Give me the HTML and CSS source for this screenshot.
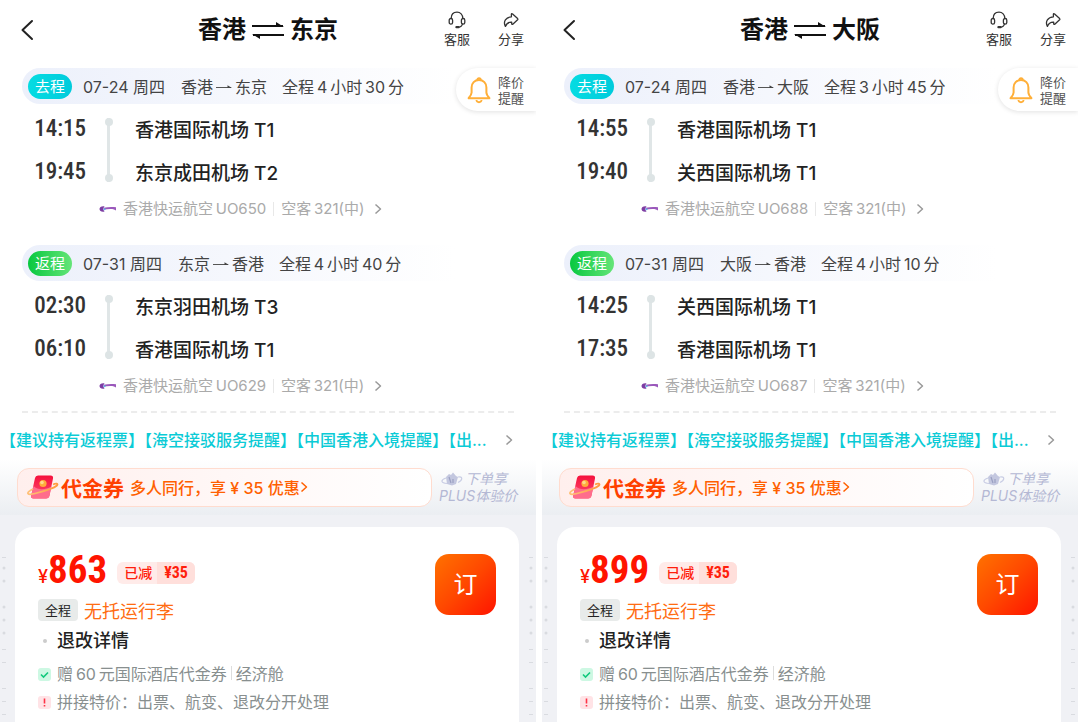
FILE: index.html
```
<!DOCTYPE html>
<html lang="zh-CN">

<head>
    <meta charset="UTF-8">
    <meta name="viewport" content="width=device-width, initial-scale=1.0">
    <title>机票对比</title>
    <link rel="stylesheet" href="styles.css">
</head>

<body>

    <!-- Shared icons -->
    <svg class="sprite" aria-hidden="true">
        <defs>
            <linearGradient id="couponFill" x1="0" y1="0" x2="0" y2="1">
                <stop offset="0" stop-color="#f5103c" />
                <stop offset="1" stop-color="#ff4f70" />
            </linearGradient>
            <linearGradient id="ringFill" x1="0" y1="0" x2="1" y2="0">
                <stop offset="0" stop-color="#ffc27a" />
                <stop offset="1" stop-color="#ff9a3d" />
            </linearGradient>
        </defs>
        <symbol id="back" viewBox="0 0 14 22">
            <path d="M12 2 L2.5 11 L12 20" fill="none" stroke="#222" stroke-width="2" stroke-linecap="round" stroke-linejoin="round" />
        </symbol>
        <symbol id="swap" viewBox="0 0 32 20">
            <path d="M0 6H31M1 15H32" fill="none" stroke="#111" stroke-width="2" />
            <path d="M32 7H24V2ZM0 14H8V19Z" fill="#111" />
        </symbol>
        <symbol id="headset" viewBox="0 0 18 18">
            <path d="M3.2 7.5C3.2 3.6 5.6 1.2 9 1.2S14.8 3.6 14.8 7.5M14.6 12.5C14.2 14.8 12.6 16.2 10 16.2" fill="none" stroke="#333" stroke-width="1.3" />
            <rect x="1.2" y="7.5" width="3.4" height="5.6" rx="1.7" fill="none" stroke="#333" stroke-width="1.3" />
            <rect x="13.4" y="7.5" width="3.4" height="5.6" rx="1.7" fill="none" stroke="#333" stroke-width="1.3" />
            <path d="M8.4 16.2H10.6" stroke="#333" stroke-width="2.2" stroke-linecap="round" />
        </symbol>
        <symbol id="share" viewBox="0 0 18 18">
            <path d="M9.4 3.2Q9.6 2.2 10.6 3L15.6 7.6Q16.2 8.2 15.6 8.8L10.8 13.2Q9.8 13.8 9.7 12.6V11.2C6.5 11 4.6 12.4 3.4 15.4C.8 10.5 4 6.2 9.4 5.8Z" fill="none" stroke="#333" stroke-width="1.3" stroke-linejoin="round" />
        </symbol>
        <symbol id="bell" viewBox="0 0 26 28">
            <path d="M13 4C8.6 4 5.6 7.2 5.6 11.4V16.5C5.6 18.6 4.4 20 2.6 22.2H23.4C21.6 20 20.4 18.6 20.4 16.5V11.4C20.4 7.2 17.4 4 13 4Z" fill="none" stroke="#ffaf38" stroke-width="2" stroke-linejoin="round" />
            <path d="M11.2 4C11.2 1.4 14.8 1.4 14.8 4M10.4 24C10.8 27 15.2 27 15.6 24" fill="none" stroke="#ffaf38" stroke-width="1.8" />
        </symbol>
        <symbol id="arrow" viewBox="0 0 16 8">
            <path d="M0 5.5H15" fill="none" stroke="#555" stroke-width="1" />
            <path d="M16 6H11.5V3.2Z" fill="#444" />
        </symbol>
        <symbol id="airline" viewBox="0 0 18 8">
            <path d="M5.5 1.3C2.5 .8 .5 2.2 .5 4S2.5 7.2 5.5 6.5L4.5 5Q3.5 4 4.5 3Z" fill="#7d3da3" />
            <path d="M4.5 2.8C9 1.8 13 1.8 17 2.2V5.4L15 4.4C12 3.9 8 4.1 4.5 4.8Z" fill="#9a58bb" />
            <circle cx="5.5" cy="4.2" r="1" fill="#58b6e8" />
        </symbol>
        <symbol id="chevron" viewBox="0 0 8 12">
            <path d="M1.5 1.5L6.5 6L1.5 10.5" fill="none" stroke="currentColor" stroke-width="1.5" stroke-linejoin="round" />
        </symbol>
        <symbol id="coupon" viewBox="0 0 32 26">
            <path d="M11 1.5H23.5Q26.5 1.5 26 4.5L22.5 21.5Q22 24.5 19 24.5H6.5Q3.5 24.5 4.2 21.5L8 4Q8.5 1.5 11 1.5Z" fill="url(#couponFill)" />
            <path d="M6.5 12C11 16.5 18 16 24.4 12.5L22.5 21.5Q22 24.5 19 24.5H6.5Q3.5 24.5 4.2 21.5Z" fill="#ff6d8c" />
            <path d="M6 15C-2 19 0 21.5 8 19.5S26 15 30 11.5C31.5 9.5 29 9 26 10.5" fill="none" stroke="url(#ringFill)" stroke-width="1.8" />
            <circle cx="16" cy="9.5" r="3.6" fill="#ffad3b" />
            <circle cx="15" cy="8.5" r="1.8" fill="#ffd98a" />
        </symbol>
        <symbol id="plus" viewBox="0 0 22 14">
            <path d="M5 5L8 2L10 3L12 .5L15 4L17 5L15 12L11 13.5L6 12Z" fill="#c3c7df" />
            <path d="M8 5L10 11M12 7V11" stroke="#9a9fc2" stroke-width="1.2" />
            <path d="M5 6C-1 8 0 11 6 11.5M17 5C22 4 22 8 17 10.5" fill="none" stroke="#c9cde4" stroke-width="1.2" />
        </symbol>
    </svg>

    <main class="compare" id="compare"></main>

    <script src="app.js"></script>
</body>

</html>
```
FILE: styles.css
```
* {
    box-sizing: border-box;
}

body {
    margin: 0;
    background-color: #fff;
    color: #222;
    font-family: Inter, "Noto Sans CJK SC", sans-serif;
}

button {
    border: none;
    padding: 0;
    background: none;
    color: inherit;
    font: inherit;
    cursor: pointer;
}

a {
    color: inherit;
    text-decoration: none;
}

svg {
    display: block;
    flex: none;
}

h1,
h2,
p,
ul {
    margin: 0;
    padding: 0;
    font-weight: 400;
    list-style: none;
}

.sprite {
    position: absolute;
    width: 0;
    height: 0;
}

.compare {
    display: grid;
    grid-template-columns: 1fr 1fr;
    gap: 6px;
    padding-right: 2px;
    min-height: 100vh;
}

.panel {
    display: flex;
    flex-direction: column;
    min-width: 0;
    position: relative;
    overflow: hidden;
}

/* Top bar */
.topbar {
    display: grid;
    grid-template-columns: 1fr auto 1fr;
    align-items: center;
    height: 60px;
    padding: 0 12px;
}

.back {
    justify-self: start;
    margin-left: 8px;
}

.back svg {
    width: 14px;
    height: 22px;
}

.title {
    display: flex;
    align-items: center;
    gap: 6px;
    font-size: 24px;
    line-height: 36px;
    font-weight: 700;
    color: #111;
}

.title svg {
    width: 32px;
    height: 20px;
}

.actions {
    justify-self: end;
    display: flex;
    gap: 28px;
    padding-bottom: 2px;
}

.actions button {
    display: flex;
    flex-direction: column;
    align-items: center;
    justify-content: flex-end;
    gap: 1px;
    font-size: 13px;
    line-height: 18px;
    color: #333;
}

.actions svg {
    width: 18px;
    height: 18px;
}

/* Price drop reminder sits over the first leg */
.remind {
    position: absolute;
    top: 68px;
    right: 0;
    display: flex;
    align-items: center;
    gap: 6px;
    height: 43px;
    padding: 0 12px 0 10px;
    border-radius: 22px 0 0 22px;
    background-color: #fff;
    box-shadow: 0 1px 5px rgba(0, 0, 0, 0.12);
    font-size: 13px;
    line-height: 16px;
    color: #555;
}

.remind svg {
    width: 26px;
    height: 28px;
}

/* Flight legs */
.legs {
    margin: 8px 22px 10px;
    border-bottom: 2px dashed #ececec;
}

.leg {
    height: 177px;
}

.leg:last-child {
    height: 166px;
}

.leg-head {
    display: flex;
    align-items: center;
    height: 36px;
    padding-left: 6px;
    border-radius: 18px;
    background: linear-gradient(90deg, #ecf0fb, #fff 88%);
    font-size: 16px;
    color: #444;
    white-space: nowrap;
}

.badge {
    width: 44px;
    margin-right: 11px;
    border-radius: 13px;
    background: linear-gradient(90deg, #05dce2, #00cbdc);
    color: #fff;
    font-size: 15px;
    line-height: 25px;
    text-align: center;
}

.badge.return {
    background: linear-gradient(90deg, #08c840, #65e578);
}

.route {
    display: flex;
    align-items: center;
    gap: 3px;
    margin: 0 15px 0 16px;
}

.route svg {
    width: 16px;
    height: 8px;
}

.stops {
    display: grid;
    grid-template-columns: 64px 45px 1fr;
    grid-template-rows: 43px 43px;
    align-items: center;
    margin-top: 3px;
}

.time {
    font-family: "Roboto Condensed", Roboto, sans-serif;
    font-size: 23px;
    font-weight: 500;
    text-align: right;
    color: #333;
}

.line {
    grid-column: 2;
    grid-row: 1 / 3;
    justify-self: center;
    display: flex;
    flex-direction: column;
    justify-content: space-between;
    width: 8px;
    height: 64px;
    background: linear-gradient(#e0e6e7, #e0e6e7) center / 3px 100% no-repeat;
}

.line::before,
.line::after {
    content: "";
    height: 8px;
    border-radius: 50%;
    background-color: #dde4e5;
}

.airport {
    grid-column: 3;
    padding-left: 4px;
    font-size: 19px;
    font-weight: 500;
    color: #222;
}

.flight {
    display: flex;
    align-items: center;
    width: max-content;
    margin-left: 77px;
    font-size: 15px;
    line-height: 32px;
    color: #aaa;
    white-space: nowrap;
}

.flight .airline {
    width: 18px;
    height: 8px;
    margin-right: 6px;
}

.plane {
    margin-left: 7px;
    padding-left: 7px;
    border-left: 1px solid #e8e8e8;
    line-height: 14px;
}

.chevron {
    width: 8px;
    height: 12px;
    color: #999;
}

.flight .chevron {
    margin-left: 10px;
}

/* Notices */
.notice {
    display: flex;
    align-items: center;
    justify-content: space-between;
    padding-right: 23px;
    font-size: 16px;
    line-height: 34px;
    font-weight: 500;
    color: #0bcbd6;
}

.notice span {
    white-space: nowrap;
}

/* Voucher strip */
.promo {
    display: flex;
    align-items: center;
    height: 56px;
    margin-top: 2px;
    padding: 0 17px;
    background: linear-gradient(#fff, #ebeef2);
}

.voucher {
    flex: 1;
    display: flex;
    align-items: center;
    height: 39px;
    padding-left: 9px;
    border: 1px solid #ffdccf;
    border-radius: 12px;
    background: linear-gradient(90deg, #ffefed, #fff);
    color: #ff6000;
    white-space: nowrap;
}

.voucher .coupon {
    width: 32px;
    height: 26px;
    margin-right: 2px;
}

.voucher strong {
    margin-right: 6px;
    font-size: 21px;
    font-weight: 700;
    color: #ff4000;
}

.voucher span {
    font-size: 16px;
    font-weight: 500;
}

.voucher .chevron {
    color: #ff6000;
}

.plus {
    width: 80px;
    margin-left: 7px;
    font-size: 14px;
    line-height: 17px;
    font-style: italic;
    color: #b4b8d4;
    white-space: nowrap;
}

.plus span {
    display: flex;
    align-items: center;
    gap: 2px;
    padding-left: 2px;
}

.plus svg {
    width: 22px;
    height: 14px;
}

/* Fare card */
.fare-area {
    position: relative;
    flex: 1;
    padding: 12px 17px 0 15px;
    background-color: #f0f1f5;
}

.ticks {
    position: absolute;
    top: 42px;
    left: 2px;
    width: 4px;
    height: 160px;
    fill: #d9dbe0;
}

.ticks.end {
    left: auto;
    right: 3px;
}

.fare {
    position: relative;
    height: 100%;
    padding: 23px 23px 0;
    border-radius: 18px 18px 0 0;
    background-color: #fff;
}

.price-row {
    display: flex;
    align-items: center;
    height: 46px;
}

.price {
    display: flex;
    align-items: baseline;
    color: #ff1400;
    font-family: "Roboto Condensed", Roboto, sans-serif;
    font-size: 39px;
    line-height: 46px;
    font-weight: 700;
}

.price small {
    font-family: Inter, sans-serif;
    font-size: 18px;
    font-weight: 500;
}

.discount {
    display: flex;
    margin-left: 10px;
    border-radius: 6px;
    overflow: hidden;
    background-color: #ffebe9;
    color: #ff1e0c;
    font-size: 14px;
    line-height: 22px;
    font-weight: 500;
}

.discount span {
    padding: 0 5px 0 7px;
}

.discount b {
    padding: 0 7px;
    background-color: #ffdfdb;
    font-family: "Roboto Condensed", Roboto, sans-serif;
    font-size: 16px;
}

.book {
    position: absolute;
    top: 27px;
    right: 23px;
    width: 61px;
    height: 61px;
    border-radius: 14px;
    background: linear-gradient(135deg, #ff7200, #ff4800 50%, #ff1400);
    color: #fff;
    font-size: 24px;
    line-height: 56px;
}

.baggage {
    display: flex;
    align-items: center;
    gap: 6px;
    height: 28px;
    margin-bottom: 3px;
    font-size: 18px;
    color: #ff6c12;
}

.tag {
    padding: 0 7px;
    border-radius: 4px;
    background-color: #e8ebea;
    font-size: 13px;
    line-height: 22px;
    color: #222;
}

.rules {
    display: flex;
    align-items: center;
    gap: 10px;
    padding-left: 5px;
    font-size: 18px;
    line-height: 28px;
    font-weight: 500;
    color: #222;
}

.rules::before {
    content: "";
    width: 4px;
    height: 4px;
    border-radius: 50%;
    background-color: #ccc;
}

.perks {
    margin-top: 5px;
    font-size: 16px;
    line-height: 28px;
    color: #888f8f;
}

.perks li {
    display: flex;
    align-items: center;
    gap: 6px;
    white-space: nowrap;
}

.perks svg {
    width: 13px;
    height: 13px;
}

.perks i {
    display: inline-block;
    width: 1px;
    height: 14px;
    margin: 0 4px;
    background-color: #ddd;
}
```
FILE: app.js
```
const trips = [
    {
        from: '香港', to: '东京', price: 863,
        legs: [
            {
                type: '去程', date: '07-24 周四', from: '香港', to: '东京', total: [4, 30],
                depart: '14:15', departAt: '香港国际机场 T1', arrive: '19:45', arriveAt: '东京成田机场 T2', flight: 'UO650'
            },
            {
                type: '返程', date: '07-31 周四', from: '东京', to: '香港', total: [4, 40],
                depart: '02:30', departAt: '东京羽田机场 T3', arrive: '06:10', arriveAt: '香港国际机场 T1', flight: 'UO629'
            }
        ]
    },
    {
        from: '香港', to: '大阪', price: 899,
        legs: [
            {
                type: '去程', date: '07-24 周四', from: '香港', to: '大阪', total: [3, 45],
                depart: '14:55', departAt: '香港国际机场 T1', arrive: '19:40', arriveAt: '关西国际机场 T1', flight: 'UO688'
            },
            {
                type: '返程', date: '07-31 周四', from: '大阪', to: '香港', total: [4, 10],
                depart: '14:25', departAt: '关西国际机场 T1', arrive: '17:35', arriveAt: '香港国际机场 T1', flight: 'UO687'
            }
        ]
    }
];

function icon(name) {
    return `<svg class="${name}" aria-hidden="true"><use href="#${name}"></use></svg>`;
}

function legHtml(leg) {
    return `
        <section class="leg">
            <h2 class="leg-head">
                <span class="badge ${leg.type === '返程' ? 'return' : ''}">${leg.type}</span>
                <span>${leg.date}</span>
                <span class="route">${leg.from}${icon('arrow')}${leg.to}</span>
                <span>全程&thinsp;${leg.total[0]}&thinsp;小时&thinsp;${leg.total[1]}&thinsp;分</span>
            </h2>
            <div class="stops">
                <span class="time">${leg.depart}</span>
                <span class="line"></span>
                <span class="airport">${leg.departAt}</span>
                <span class="time">${leg.arrive}</span>
                <span class="airport">${leg.arriveAt}</span>
            </div>
            <a class="flight" href="#">${icon('airline')}香港快运航空&thinsp;${leg.flight}<span class="plane">空客&thinsp;321(中)</span>${icon('chevron')}</a>
        </section>`;
}

// Small marks down the side of the fare area
function ticksHtml(side) {
    const dots = [11, 24, 50, 63, 76].map(y => `<circle cx="2" cy="${y}" r="1.5"></circle>`).join('');
    const dashes = [0, 92, 105, 131, 144, 157].map(y => `<rect x="0" y="${y}" width="4" height="1"></rect>`).join('');
    return `<svg class="ticks ${side}" viewBox="0 0 4 160" aria-hidden="true">${dots}${dashes}</svg>`;
}

function tripHtml(trip) {
    return `
        <article class="panel">
            <header class="topbar">
                <button class="back" aria-label="返回"><svg><use href="#back"></use></svg></button>
                <h1 class="title">${trip.from}${icon('swap')}${trip.to}</h1>
                <div class="actions">
                    <button>${icon('headset')}客服</button>
                    <button>${icon('share')}分享</button>
                </div>
            </header>
            <button class="remind">${icon('bell')}<span>降价<br>提醒</span></button>
            <div class="legs">${trip.legs.map(legHtml).join('')}</div>
            <a class="notice" href="#"><span>【建议持有返程票】【海空接驳服务提醒】【中国香港入境提醒】【出...</span>${icon('chevron')}</a>
            <div class="promo">
                <button class="voucher">${icon('coupon')}<strong>代金券</strong><span>多人同行，享 ¥ 35 优惠</span>${icon('chevron')}</button>
                <p class="plus"><span><svg><use href="#plus"></use></svg>下单享</span>PLUS体验价</p>
            </div>
            <div class="fare-area">
                ${ticksHtml('start')}
                <section class="fare">
                    <div class="price-row">
                        <p class="price"><small>¥</small>${trip.price}</p>
                        <p class="discount"><span>已减</span><b>¥35</b></p>
                    </div>
                    <button class="book">订</button>
                    <p class="baggage"><span class="tag">全程</span>无托运行李</p>
                    <p class="rules">退改详情</p>
                    <ul class="perks">
                        <li>
                            <svg viewBox="0 0 13 13"><rect width="13" height="13" rx="3" fill="#cdf8e3"></rect><path d="M3 6.5L5.5 9L10 4.5" fill="none" stroke="#10c97c" stroke-width="1.6"></path></svg>
                            <span>赠&thinsp;60&thinsp;元国际酒店代金券<i></i>经济舱</span>
                        </li>
                        <li>
                            <svg viewBox="0 0 13 13"><rect width="13" height="13" rx="3" fill="#ffe3e6"></rect><path d="M6.5 2.5V7.5M6.5 9V10.5" stroke="#ff3347" stroke-width="1.6"></path></svg>
                            <span>拼接特价：出票、航变、退改分开处理</span>
                        </li>
                    </ul>
                </section>
                ${ticksHtml('end')}
            </div>
        </article>`;
}

document.getElementById('compare').innerHTML = trips.map(tripHtml).join('');
```
